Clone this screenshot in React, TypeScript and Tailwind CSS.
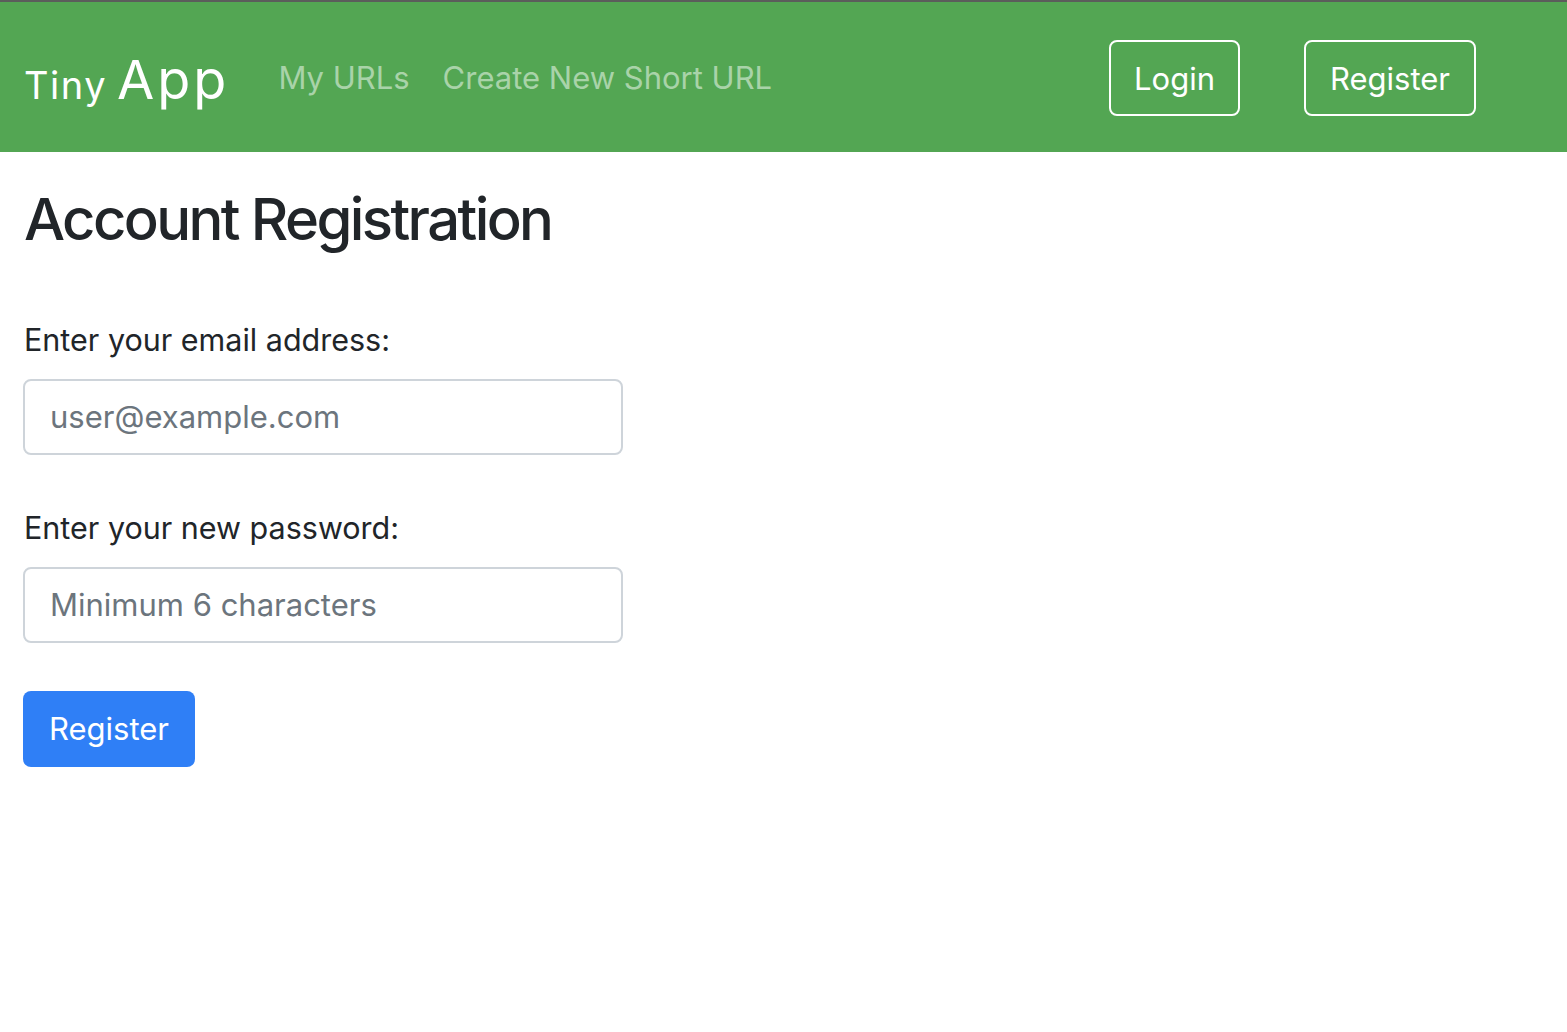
import React from "react";

export default function App() {
  const font = { fontFamily: "Inter, 'Noto Sans', 'Liberation Sans', sans-serif" };
  return (
    <div className="min-h-[1032px] bg-white" style={font}>
      <div className="h-[2px] bg-[#5b5d5b]" />
      <nav className="h-[150px] bg-[#53a653] flex items-center px-6">
        <div className="flex items-baseline text-white translate-y-[3px]">
          <span className="text-[38px] leading-none tracking-[1.5px]">Tiny</span>
          <span className="text-[54px] leading-none tracking-[3px] ml-[10px]">App</span>
        </div>
        <div className="flex items-baseline ml-[49px] gap-[33px] text-[31px] leading-none text-[#a9d3a9]">
          <span>My URLs</span>
          <span>Create New Short URL</span>
        </div>
        <div className="ml-auto mr-[67px] flex gap-[64px] translate-y-[1px]">
          <button className="h-[76px] w-[131px] border-2 border-white rounded-[8px] text-white text-[31px] leading-none">
            Login
          </button>
          <button className="h-[76px] w-[172px] border-2 border-white rounded-[8px] text-white text-[31px] leading-none">
            Register
          </button>
        </div>
      </nav>
      <main className="px-6 text-[#212529]">
        <h1 className="mt-[33px] text-[58px] leading-[1.2] font-medium tracking-[-2.6px]">Account Registration</h1>
        <form className="mt-[60px] flex flex-col">
          <label className="text-[30.5px] leading-[48px] translate-y-[1px]">Enter your email address:</label>
          <input
            type="email"
            placeholder="user@example.com"
            className="mt-4 w-[600px] h-[76px] border-2 border-[#ced4da] rounded-[8px] px-[25px] text-[31px] placeholder:text-[#6c757d] outline-none -ml-px"
          />
          <label className="mt-[48px] text-[30.5px] leading-[48px] translate-y-[1px]">Enter your new password:</label>
          <input
            type="password"
            placeholder="Minimum 6 characters"
            className="mt-4 w-[600px] h-[76px] border-2 border-[#ced4da] rounded-[8px] px-[25px] text-[31px] placeholder:text-[#6c757d] outline-none -ml-px"
          />
          <div className="mt-[48px]">
            <button
              type="button"
              className="-ml-px h-[76px] w-[172px] bg-[#2f7ff6] rounded-[8px] text-white text-[31px] leading-none"
            >
              Register
            </button>
          </div>
        </form>
      </main>
    </div>
  );
}
